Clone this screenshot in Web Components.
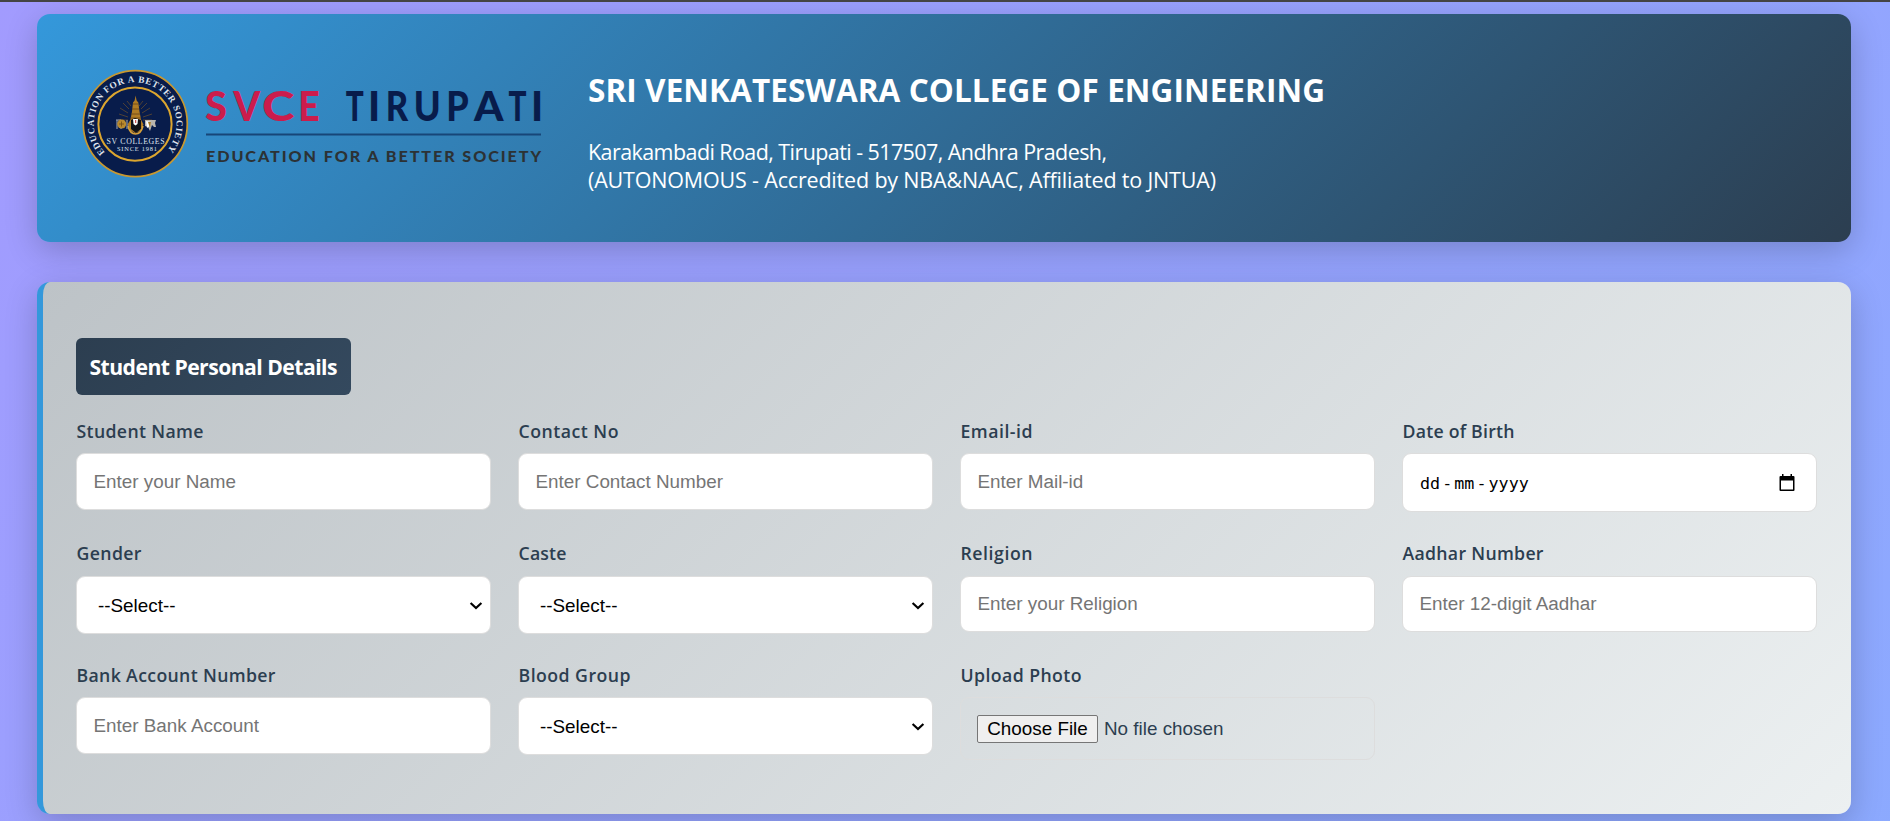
<!DOCTYPE html>
<html lang="en">
<head>
<meta charset="utf-8">
<title>SVCE Tirupati - Student Details</title>
<style>
html{height:821px;overflow:hidden}
body{margin:0;height:821px;overflow:hidden;font-family:"Open Sans","Noto Sans",sans-serif;color:#2c3e50;background:linear-gradient(135deg,#a29bfe,#74b9ff) 0 0/1890px 3800px no-repeat}
</style>
</head>
<body>
<student-page></student-page>
<script>
const define = (name, html, setup) => {
  const t = document.createElement('template');
  t.innerHTML = html;
  customElements.define(name, class extends HTMLElement {
    connectedCallback() {
      if (this.shadowRoot) return;
      this.attachShadow({mode: 'open'}).append(t.content.cloneNode(true));
      if (setup) setup(this, this.shadowRoot);
    }
  });
};

// A single line whose tracking is set so that it spans the width in "w".
define('fit-text', `<style>:host{display:block;white-space:nowrap}span{display:inline-block}</style><span></span>`, (el, root) => {
  const s = root.querySelector('span');
  s.textContent = el.getAttribute('text');
  const w = parseFloat(el.getAttribute('w'));
  const n = s.textContent.length;
  s.style.letterSpacing = ((w - s.getBoundingClientRect().width) / (n - 1)).toFixed(3) + 'px';
});

// Wordmark letters: glyph, left edge, advance.
const word = list => list.map(([c, x, w]) => `<tspan x="${x}" textLength="${w}" lengthAdjust="spacingAndGlyphs">${c}</tspan>`).join('');
define('svce-logo', `<style>:host{display:block;width:470px;height:120px}svg{display:block}
text{font-family:Lato,sans-serif}.w{font-family:"Liberation Serif",serif;fill:#dfe4ee;font-weight:700}</style>
<svg width="470" height="120" viewBox="75 63 470 120">
<ellipse cx="135.3" cy="123.7" rx="52" ry="53" fill="#081c4b" stroke="#c9982f" stroke-width="1.7"/>
<circle cx="135" cy="124.2" r="36.6" fill="none" stroke="#dca62f" stroke-width="2"/>
<path id="arc" d="M105 152.5 A41.400 41.700 0 1 1 165.300 152.500" fill="none"/>
<text class="w" font-size="9.2"><textPath href="#arc" textLength="190">EDUCATION FOR A BETTER SOCIETY</textPath></text>
<g stroke="#77562a" stroke-width=".8" opacity=".8"><path d="M128 117l-9-3M128 113l-8-5M129 109l-6-6M131 106l-4-5M143 117l9-3M142 113l8-5M141 109l6-6M139 106l4-5M128 120h-10M143 120h9"/></g>
<path d="M135.600 95.500l1 5 1.700 2 1.200 9 1.500 8 2.500 5-3 6-5 3-5-3-3-6 3-5 1.500-8 1-9 1.600-2z" fill="#b07c24"/>
<path d="M133 104h5M132 109h7M131 114h9M130 118h11" stroke="#654319" stroke-width=".8"/>
<path d="M131 120l4-2 6 2v9l-5 4-5-4z" fill="#101217"/><path d="M133 119h5l-.5 5-2 1.500-2-1.500z" fill="#fff"/><path d="M135.200 120h1v3h-1z" fill="#b92b2b"/>
<path d="M128 126q2 8 7.500 8t7.500-8" fill="none" stroke="#d7a13a" stroke-width="1.600"/>
<path d="M117 120v9m-1-9h5m0 0v9m6-9v9" stroke="#9aa0ad" stroke-width="1.100"/>
<circle cx="121.700" cy="124" r="4.500" fill="#b98a2d"/><path d="M119 124h5m-2.500-2.500v5" stroke="#6e4a17" stroke-width=".8"/>
<path d="M145 120h11l-1 3 1 4h-2l-2-2-2 6-2-4-3-1z" fill="#b9b5ad"/><path d="M146 121l5 1-1 4-3 2z" fill="#fff"/><path d="M148 122h3l-1 6z" fill="#a37a2b"/>
<text class="w" style="font-weight:400" x="106.600" y="143.600" font-size="7.800" textLength="58">SV COLLEGES</text>
<text class="w" style="font-weight:400" x="117" y="151.200" font-size="6.400" textLength="40">SINCE 1981</text>
<text y="120.700" font-size="42.500" font-weight="900" fill="#cb1c4c" >${word([['S',205,22],['V',233.300,27],['C',262,32.500],['E',298.300,21.500]])}</text>
<text y="120.700" font-size="42.500" font-weight="900" fill="#081c4b">${word([['T',345.800,18],['I',367.900,12.200],['R',385.700,22.500],['U',413.700,27],['P',446.200,22.500],['A',474,29.500],['T',508.500,18],['I',531,12.200]])}</text>
<path d="M206 134.600h335" stroke="#174678" stroke-width="2"/>
<text x="206" y="162.400" font-size="14.300" font-weight="900" fill="#2c3235" textLength="337" lengthAdjust="spacingAndGlyphs" letter-spacing="1.700">EDUCATION FOR A BETTER SOCIETY</text>
</svg>`);

define('college-banner', `<style>
:host{display:flex;box-sizing:border-box;height:228px;padding:49px 38px;gap:43px;border-radius:13px;color:#fff;background:linear-gradient(135deg,#3498db,#2c3e50);box-shadow:0 9px 33px rgba(0,0,0,.2)}
.t{font-size:31.5px;font-weight:700;line-height:44px;margin-top:5px}
.s{font-size:21.5px;line-height:28px}.f{margin-top:26px}
</style><svce-logo></svce-logo><div>
<fit-text class="t" w="737" text="SRI VENKATESWARA COLLEGE OF ENGINEERING"></fit-text>
<fit-text class="s f" w="519" text="Karakambadi Road, Tirupati - 517507, Andhra Pradesh,"></fit-text>
<fit-text class="s" w="628" text="(AUTONOMOUS - Accredited by NBA&amp;NAAC, Affiliated to JNTUA)"></fit-text></div>`);

const controls = {
  text: ph => `<input type="text" placeholder="${ph}">`,
  select: () => `<div class="pick"><select><option>--Select--</option></select>
    <svg width="14" height="10" viewBox="0 0 14 10"><path d="M1.600 2l5.400 5 5.400-5" fill="none" stroke="#000" stroke-width="2.200"/></svg></div>`,
  date: () => `<div class="box date"><span>dd</span><i>-</i><span>mm</span><i>-</i><span>yyyy</span>
    <svg width="16" height="18" viewBox="0 0 16 18"><path d="M3 0h1.500v2h7V0H13v2h1.500q1 0 1 1v13q0 1-1 1h-13q-1 0-1-1V3q0-1 1-1H3z M2 6.500v9h12v-9z" fill="#000" fill-rule="evenodd"/></svg></div>`,
  file: () => `<div class="box file"><button>Choose File</button><span>No file chosen</span></div>`
};
define('form-field', `<style>
:host{display:block}
fit-text{font-size:17.700px;font-weight:600;line-height:24px;margin-bottom:var(--label-gap,10px);padding-left:.5px}
input,select,.box{display:block;box-sizing:border-box;width:100%;border:1px solid #ddd;border-radius:9px;background:#fff;font:18.850px "Liberation Sans",Arial,sans-serif}
input{height:var(--input-h,57px);padding:0 16.500px;margin:0}
.pick{display:grid;align-items:center}
.pick>*{grid-area:1/1}.pick svg{justify-self:end;margin:2px 8px 0 0;pointer-events:none}
select{height:58px;margin:0;padding:0 21px;color:#000;appearance:none}
.box{display:flex;align-items:center}
.date{height:59px;padding:0 21px 0 17px;color:#000;font:16.700px "DejaVu Sans Mono",monospace}
.date i{font-style:normal;width:14.200px;text-align:center}.date svg{margin-left:auto}
.file{height:63px;padding:0 16px;background:none}
button{font:18.850px "Liberation Sans",Arial,sans-serif;height:28px;width:121px;padding:0;border:1px solid #767676;border-radius:2px;background:#efefef;color:#000;margin-right:6px;white-space:nowrap}
</style><div id="l"></div><div id="c"></div>`, (el, root) => {
  const label = document.createElement('fit-text');
  label.setAttribute('text', el.getAttribute('label'));
  label.setAttribute('w', el.getAttribute('w'));
  root.querySelector('#l').append(label);
  root.querySelector('#c').innerHTML = controls[el.getAttribute('kind')](el.getAttribute('hint'));
});

define('details-card', `<style>
:host{display:block;box-sizing:border-box;height:532px;padding:56px 34px 0 33px;border-left:6px solid #3498db;border-radius:13px;background:linear-gradient(135deg,#bdc3c7,#ecf0f1);box-shadow:0 9px 33px rgba(0,0,0,.2)}
.h{box-sizing:border-box;width:275px;height:57px;padding:0 13.500px;border-radius:6px;background:linear-gradient(135deg,#2c3e50,#34495e);color:#fff;font-size:21.200px;font-weight:700;line-height:58px}
.g{display:grid;grid-template-columns:repeat(4,minmax(0,1fr));column-gap:27px;grid-auto-rows:122.200px;margin-top:24px}
</style><fit-text class="h" w="248" text="Student Personal Details"></fit-text><div class="g"><slot></slot></div>`);

define('student-page', `<style>
:host{display:block;box-sizing:border-box;height:821px;padding:0 39px 0 37px;border-top:2px solid #444;overflow:hidden}
college-banner{margin-top:12px}details-card{margin-top:40px}
form-field:nth-child(n+5):nth-child(-n+8){--label-gap:11px;--input-h:56px}
</style><college-banner></college-banner><details-card></details-card>`, (el, root) => {
  root.querySelector('details-card').innerHTML = [
    ['Student Name', 127, 'text', 'Enter your Name'], ['Contact No', 100, 'text', 'Enter Contact Number'],
    ['Email-id', 72, 'text', 'Enter Mail-id'], ['Date of Birth', 112, 'date', ''],
    ['Gender', 65, 'select', ''], ['Caste', 48, 'select', ''],
    ['Religion', 72, 'text', 'Enter your Religion'], ['Aadhar Number', 141, 'text', 'Enter 12-digit Aadhar'],
    ['Bank Account Number', 199, 'text', 'Enter Bank Account'], ['Blood Group', 112, 'select', ''],
    ['Upload Photo', 121, 'file', '']
  ].map(([label, w, kind, hint]) => `<form-field label="${label}" w="${w}" kind="${kind}" hint="${hint}"></form-field>`).join('');
});
</script>
</body>
</html>
